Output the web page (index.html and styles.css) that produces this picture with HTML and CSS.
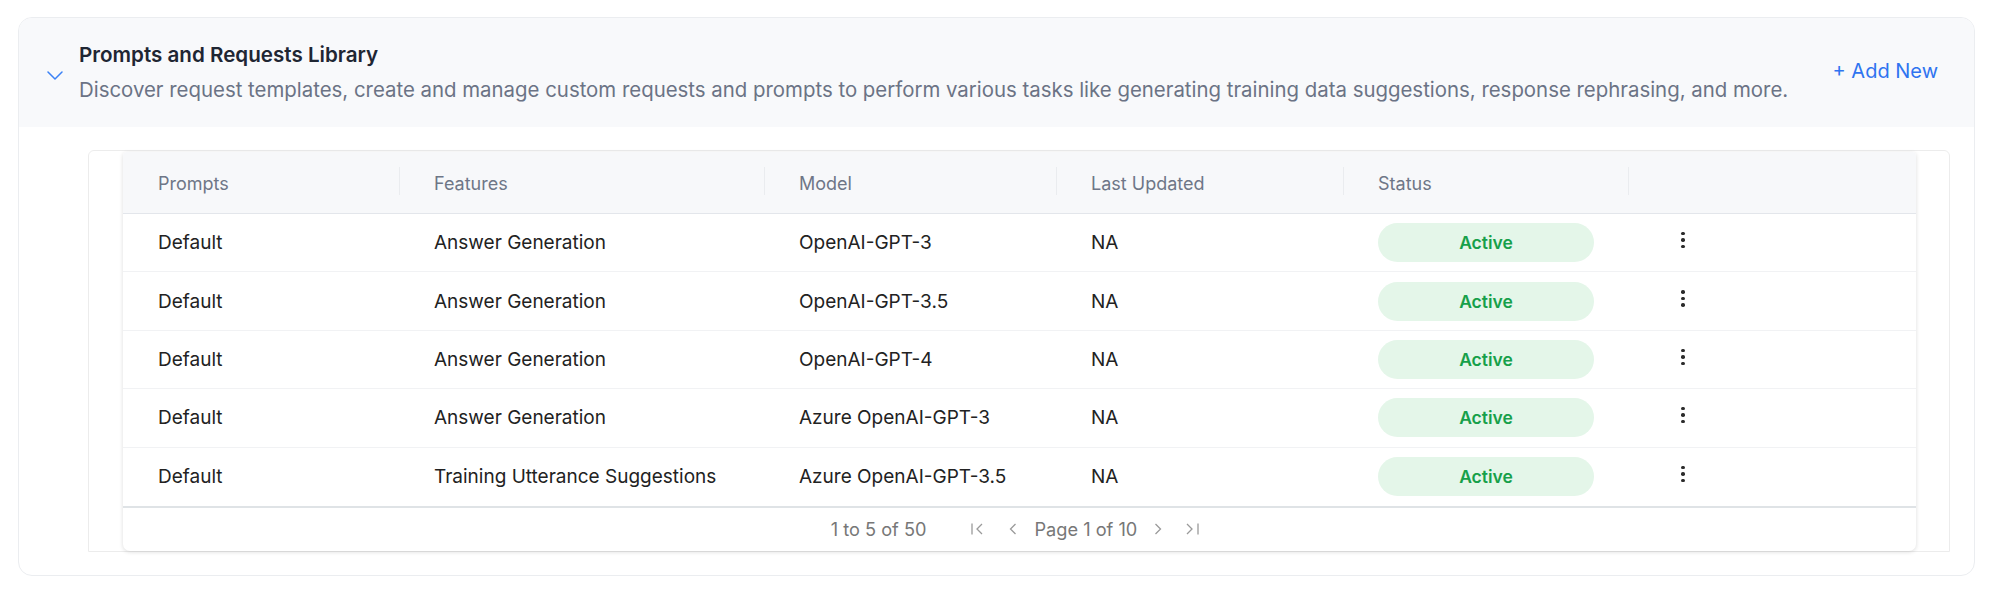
FILE: index.html
```html
<!DOCTYPE html>
<html lang="en">
<head>
<meta charset="utf-8">
<title>Prompts and Requests Library</title>
<link rel="stylesheet" href="styles.css">
</head>
<body>
<section class="card">
  <header class="card-head">
    <svg class="chevron" width="16" height="9" viewBox="0 0 16 9"><path d="M1 1l7 7 7-7" fill="none" stroke="#3b82f6" stroke-width="1.5" stroke-linecap="round" stroke-linejoin="round"/></svg>
    <div class="head-text">
      <h2 class="title">Prompts and Requests Library</h2>
      <p class="desc">Discover request templates, create and manage custom requests and prompts to perform various tasks like generating training data suggestions, response rephrasing, and more.</p>
    </div>
    <a class="add-new">+ Add New</a>
  </header>
  <div class="card-body">
    <div class="wrapper">
      <div class="grid">
        <div class="row head">
          <div class="cell">Prompts</div>
          <div class="cell sep">Features</div>
          <div class="cell sep">Model</div>
          <div class="cell sep">Last Updated</div>
          <div class="cell sep">Status</div>
          <div class="cell sep"></div>
        </div>
        <div class="row">
          <div class="cell">Default</div>
          <div class="cell">Answer Generation</div>
          <div class="cell">OpenAI-GPT-3</div>
          <div class="cell">NA</div>
          <div class="cell"><span class="pill">Active</span></div>
          <div class="cell"><span class="kebab"><i></i><i></i><i></i></span></div>
        </div>
        <div class="row">
          <div class="cell">Default</div>
          <div class="cell">Answer Generation</div>
          <div class="cell">OpenAI-GPT-3.5</div>
          <div class="cell">NA</div>
          <div class="cell"><span class="pill">Active</span></div>
          <div class="cell"><span class="kebab"><i></i><i></i><i></i></span></div>
        </div>
        <div class="row">
          <div class="cell">Default</div>
          <div class="cell">Answer Generation</div>
          <div class="cell">OpenAI-GPT-4</div>
          <div class="cell">NA</div>
          <div class="cell"><span class="pill">Active</span></div>
          <div class="cell"><span class="kebab"><i></i><i></i><i></i></span></div>
        </div>
        <div class="row">
          <div class="cell">Default</div>
          <div class="cell">Answer Generation</div>
          <div class="cell">Azure OpenAI-GPT-3</div>
          <div class="cell">NA</div>
          <div class="cell"><span class="pill">Active</span></div>
          <div class="cell"><span class="kebab"><i></i><i></i><i></i></span></div>
        </div>
        <div class="row last">
          <div class="cell">Default</div>
          <div class="cell">Training Utterance Suggestions</div>
          <div class="cell">Azure OpenAI-GPT-3.5</div>
          <div class="cell">NA</div>
          <div class="cell"><span class="pill">Active</span></div>
          <div class="cell"><span class="kebab"><i></i><i></i><i></i></span></div>
        </div>
        <div class="pager">
          <span class="count">1 to 5 of 50</span>
          <span class="nav">
            <svg class="pg-first" width="13" height="12" viewBox="0 0 13 12"><path d="M1 0.5v11M11 1L6 6l5 5" fill="none" stroke="#9a9a9a" stroke-width="1.3"/></svg>
            <svg class="pg-prev" width="8" height="12" viewBox="0 0 8 12"><path d="M6.5 1L1.5 6l5 5" fill="none" stroke="#9a9a9a" stroke-width="1.3"/></svg>
            <span class="page">Page 1 of 10</span>
            <svg class="pg-next" width="8" height="12" viewBox="0 0 8 12"><path d="M1.5 1l5 5-5 5" fill="none" stroke="#9a9a9a" stroke-width="1.3"/></svg>
            <svg class="pg-last" width="13" height="12" viewBox="0 0 13 12"><path d="M1 1l5 5-5 5M12 0.5v11" fill="none" stroke="#9a9a9a" stroke-width="1.3"/></svg>
          </span>
        </div>
      </div>
    </div>
  </div>
</section>
</body>
</html>
```

FILE: styles.css
```css
* { box-sizing: border-box; }
html, body { margin: 0; padding: 0; background: #ffffff; }
body {
  font-family: Inter, "Noto Sans", sans-serif;
  padding: 17px 24px 0 18px;
  color: #1f1f1f;
}
.card {
  border: 1px solid #ebedf0;
  border-radius: 14px;
  overflow: hidden;
  background: #fff;
}
.card-head {
  display: flex;
  align-items: center;
  background: #f8f9fb;
  height: 109px;
  padding: 0 36px 0 28px;
}
.chevron { flex: none; margin-right: 16px; margin-top: 5px; }
.head-text { flex: 1; min-width: 0; }
.title {
  margin: 0;
  font-size: 20.6px;
  line-height: 26px;
  font-weight: 600;
  color: #1f2633;
}
.desc {
  margin: 9px 0 0;
  font-size: 20.4px;
  line-height: 26px;
  color: #6b7385;
  white-space: nowrap;
}
.add-new {
  flex: none;
  font-size: 20px;
  color: #2f74f0;
  margin-top: -3px;
}
.card-body { padding: 23px 24px 23px 69px; }
.wrapper {
  border: 1px solid #ececec;
  border-radius: 6px 6px 0 0;
  padding: 1px 33px 0 34px;
}
.grid {
  background: #fff;
  border-radius: 4px 4px 7px 7px;
  box-shadow: 0 1px 4px rgba(0,0,0,0.14);
  overflow: hidden;
}
.row {
  display: grid;
  grid-template-columns: 276px 365px 292px 287px 285px 1fr;
  height: 58.4px;
  border-bottom: 1px solid #f1f2f4;
  align-items: center;
  font-size: 19px;
  color: #222;
}
.row.last { border-bottom: none; }
.row.head {
  height: 62px;
  border-bottom: 1px solid #e3e6eb;
  font-size: 18px;
  color: #6e7687;
  background: #f7f8fa;
}
.row.head .cell { height: 100%; display: flex; align-items: center; position: relative; padding-top: 2px; }
.row.head .sep::before {
  content: "";
  position: absolute;
  left: 0;
  top: 15px;
  bottom: 18px;
  width: 1px;
  background: #eaecef;
}
.cell { padding: 0 34px 0 35px; white-space: nowrap; }
.pill {
  display: flex;
  align-items: center;
  justify-content: center;
  height: 39px;
  border-radius: 20px;
  background: #e4f6e9;
  color: #16a04a;
  font-weight: 600;
  font-size: 17.5px;
}
.kebab {
  display: inline-flex;
  flex-direction: column;
  gap: 3px;
  margin-left: 18px;
  margin-top: -8px;
  vertical-align: middle;
}
.kebab i {
  display: block;
  width: 3.5px;
  height: 3.5px;
  border-radius: 50%;
  background: #2b2b2b;
}
.pager {
  height: 45px;
  border-top: 2px solid #dfe3e6;
  display: flex;
  align-items: center;
  justify-content: center;
  font-size: 18.2px;
  color: #777;
  padding-right: 9px;
}
.count { margin-right: 45px; }
.nav { display: flex; align-items: center; }
.pg-first { margin-right: 25px; }
.pg-prev { margin-right: 17px; }
.page { margin-right: 17px; }
.pg-next { margin-right: 24px; }
```
